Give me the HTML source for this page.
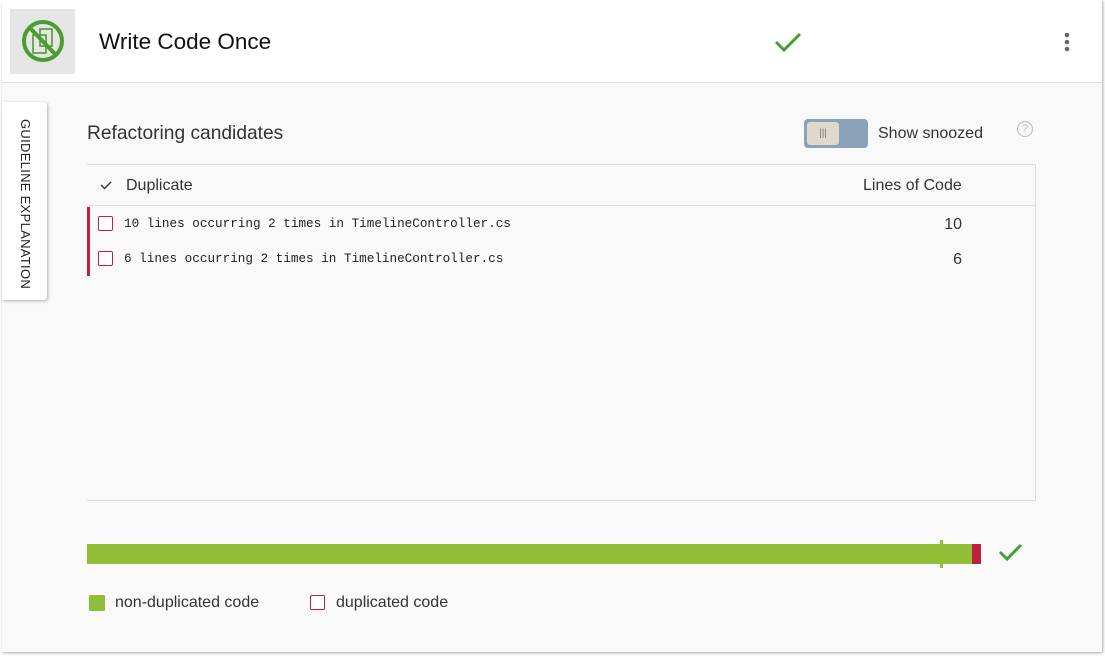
<!DOCTYPE html>
<html><head><style>
body{margin:0;width:1105px;height:656px;background:#fff;font-family:"Liberation Sans",sans-serif;position:relative;overflow:hidden}
.card{position:absolute;left:2px;top:0;width:1100px;height:652px;background:#f9f9f9;box-shadow:1px 1px 3px rgba(0,0,0,.35)}
.hdr{position:absolute;left:0;top:0;width:1100px;height:82px;background:#fff;border-bottom:1px solid #e2e2e2}
.abs{position:absolute}
.mono{font-family:"Liberation Mono",monospace;font-size:12.65px;color:#222}
.cb{position:absolute;width:13px;height:13px;border:1.5px solid #c0203f;border-radius:2px;background:#fff}
</style></head><body>
<div class="card">
 <div class="hdr">
  <div class="abs" style="left:8px;top:9px;width:65px;height:65px;background:#e6e6e6"></div>
  <svg class="abs" style="left:8px;top:9px" width="65" height="65" viewBox="0 0 65 65">
   <circle cx="33" cy="32" r="19" fill="none" stroke="#4a9e2f" stroke-width="4"/>
   <rect x="23" y="26" width="13" height="18" fill="none" stroke="#4a9e2f" stroke-width="1.6"/>
   <rect x="30" y="20" width="12" height="17" fill="none" stroke="#4a9e2f" stroke-width="1.6"/>
   <line x1="20" y1="19" x2="46" y2="46" stroke="#4a9e2f" stroke-width="4"/>
  </svg>
  <div class="abs" style="left:97px;top:29px;font-size:22.5px;color:#111">Write Code Once</div>
  <svg class="abs" style="left:770px;top:30px" width="32" height="24"><path d="M4 12 L12 20 L28 4" fill="none" stroke="#4a9e2f" stroke-width="3"/></svg>
  <svg class="abs" style="left:1060px;top:31px" width="10" height="24"><circle cx="5" cy="4" r="2.3" fill="#666"/><circle cx="5" cy="11" r="2.3" fill="#666"/><circle cx="5" cy="18" r="2.3" fill="#666"/></svg>
 </div>
 <div class="abs" style="left:0;top:102px;width:45px;height:198px;background:#fff;box-shadow:1px 1px 3px rgba(0,0,0,.3);border-radius:0 3px 3px 0"></div>
 <div class="abs" style="left:10px;top:119px;width:26px;height:175px;writing-mode:vertical-rl;font-size:13px;color:#222;letter-spacing:.3px;line-height:26px">GUIDELINE EXPLANATION</div>
 <div class="abs" style="left:85px;top:123px;font-size:19.2px;color:#333">Refactoring candidates</div>
 <div class="abs" style="left:802px;top:119px;width:64px;height:29px;background:#8aa3b8;border-radius:4px"></div>
 <div class="abs" style="left:805px;top:122px;width:32px;height:23px;background:#dfd8cc;border-radius:3px;text-align:center;font-size:10px;color:#777;line-height:23px">|||</div>
 <div class="abs" style="left:876px;top:125px;font-size:16px;color:#333">Show snoozed</div>
 <div class="abs" style="left:1015px;top:121px;width:14px;height:14px;border:1.3px solid #bbb;border-radius:50%;font-size:11px;color:#bbb;text-align:center;line-height:14px">?</div>
 <div class="abs" style="left:85px;top:164px;width:948px;height:335px;border-top:1px solid #ddd;border-right:1px solid #ddd;border-bottom:1px solid #ddd"></div>
 <div class="abs" style="left:85px;top:205px;width:948px;border-top:1px solid #ddd"></div>
 <svg class="abs" style="left:97px;top:178px" width="14" height="14"><path d="M2 7 L5.5 10.5 L12 4" fill="none" stroke="#333" stroke-width="1.4"/></svg>
 <div class="abs" style="left:124px;top:177px;font-size:16px;color:#333">Duplicate</div>
 <div class="abs" style="left:861px;top:177px;font-size:16px;color:#333">Lines of Code</div>
 <div class="abs" style="left:85px;top:207px;width:3px;height:69px;background:#c0203f"></div>
 <div class="cb" style="left:96px;top:216px"></div>
 <div class="cb" style="left:96px;top:251px"></div>
 <div class="abs mono" style="left:122px;top:216px">10 lines occurring 2 times in TimelineController.cs</div>
 <div class="abs mono" style="left:122px;top:251px">6 lines occurring 2 times in TimelineController.cs</div>
 <div class="abs" style="left:900px;top:216px;width:60px;text-align:right;font-size:16px;color:#333">10</div>
 <div class="abs" style="left:900px;top:251px;width:60px;text-align:right;font-size:16px;color:#333">6</div>
 <div class="abs" style="left:85px;top:544px;width:885px;height:20px;background:#93be37"></div>
 <div class="abs" style="left:970px;top:544px;width:9px;height:20px;background:#c0203f"></div>
 <div class="abs" style="left:938px;top:540px;width:3px;height:28px;background:#93be37"></div>
 <svg class="abs" style="left:995px;top:541px" width="30" height="24"><path d="M3 11 L10 18 L24 4" fill="none" stroke="#4a9e2f" stroke-width="3"/></svg>
 <div class="abs" style="left:87px;top:595px;width:16px;height:16px;background:#93be37;border-radius:1px"></div>
 <div class="abs" style="left:113px;top:594px;font-size:16px;color:#333">non-duplicated code</div>
 <div class="cb" style="left:308px;top:595px"></div>
 <div class="abs" style="left:334px;top:594px;font-size:16px;color:#333">duplicated code</div>
</div>
</body></html>
